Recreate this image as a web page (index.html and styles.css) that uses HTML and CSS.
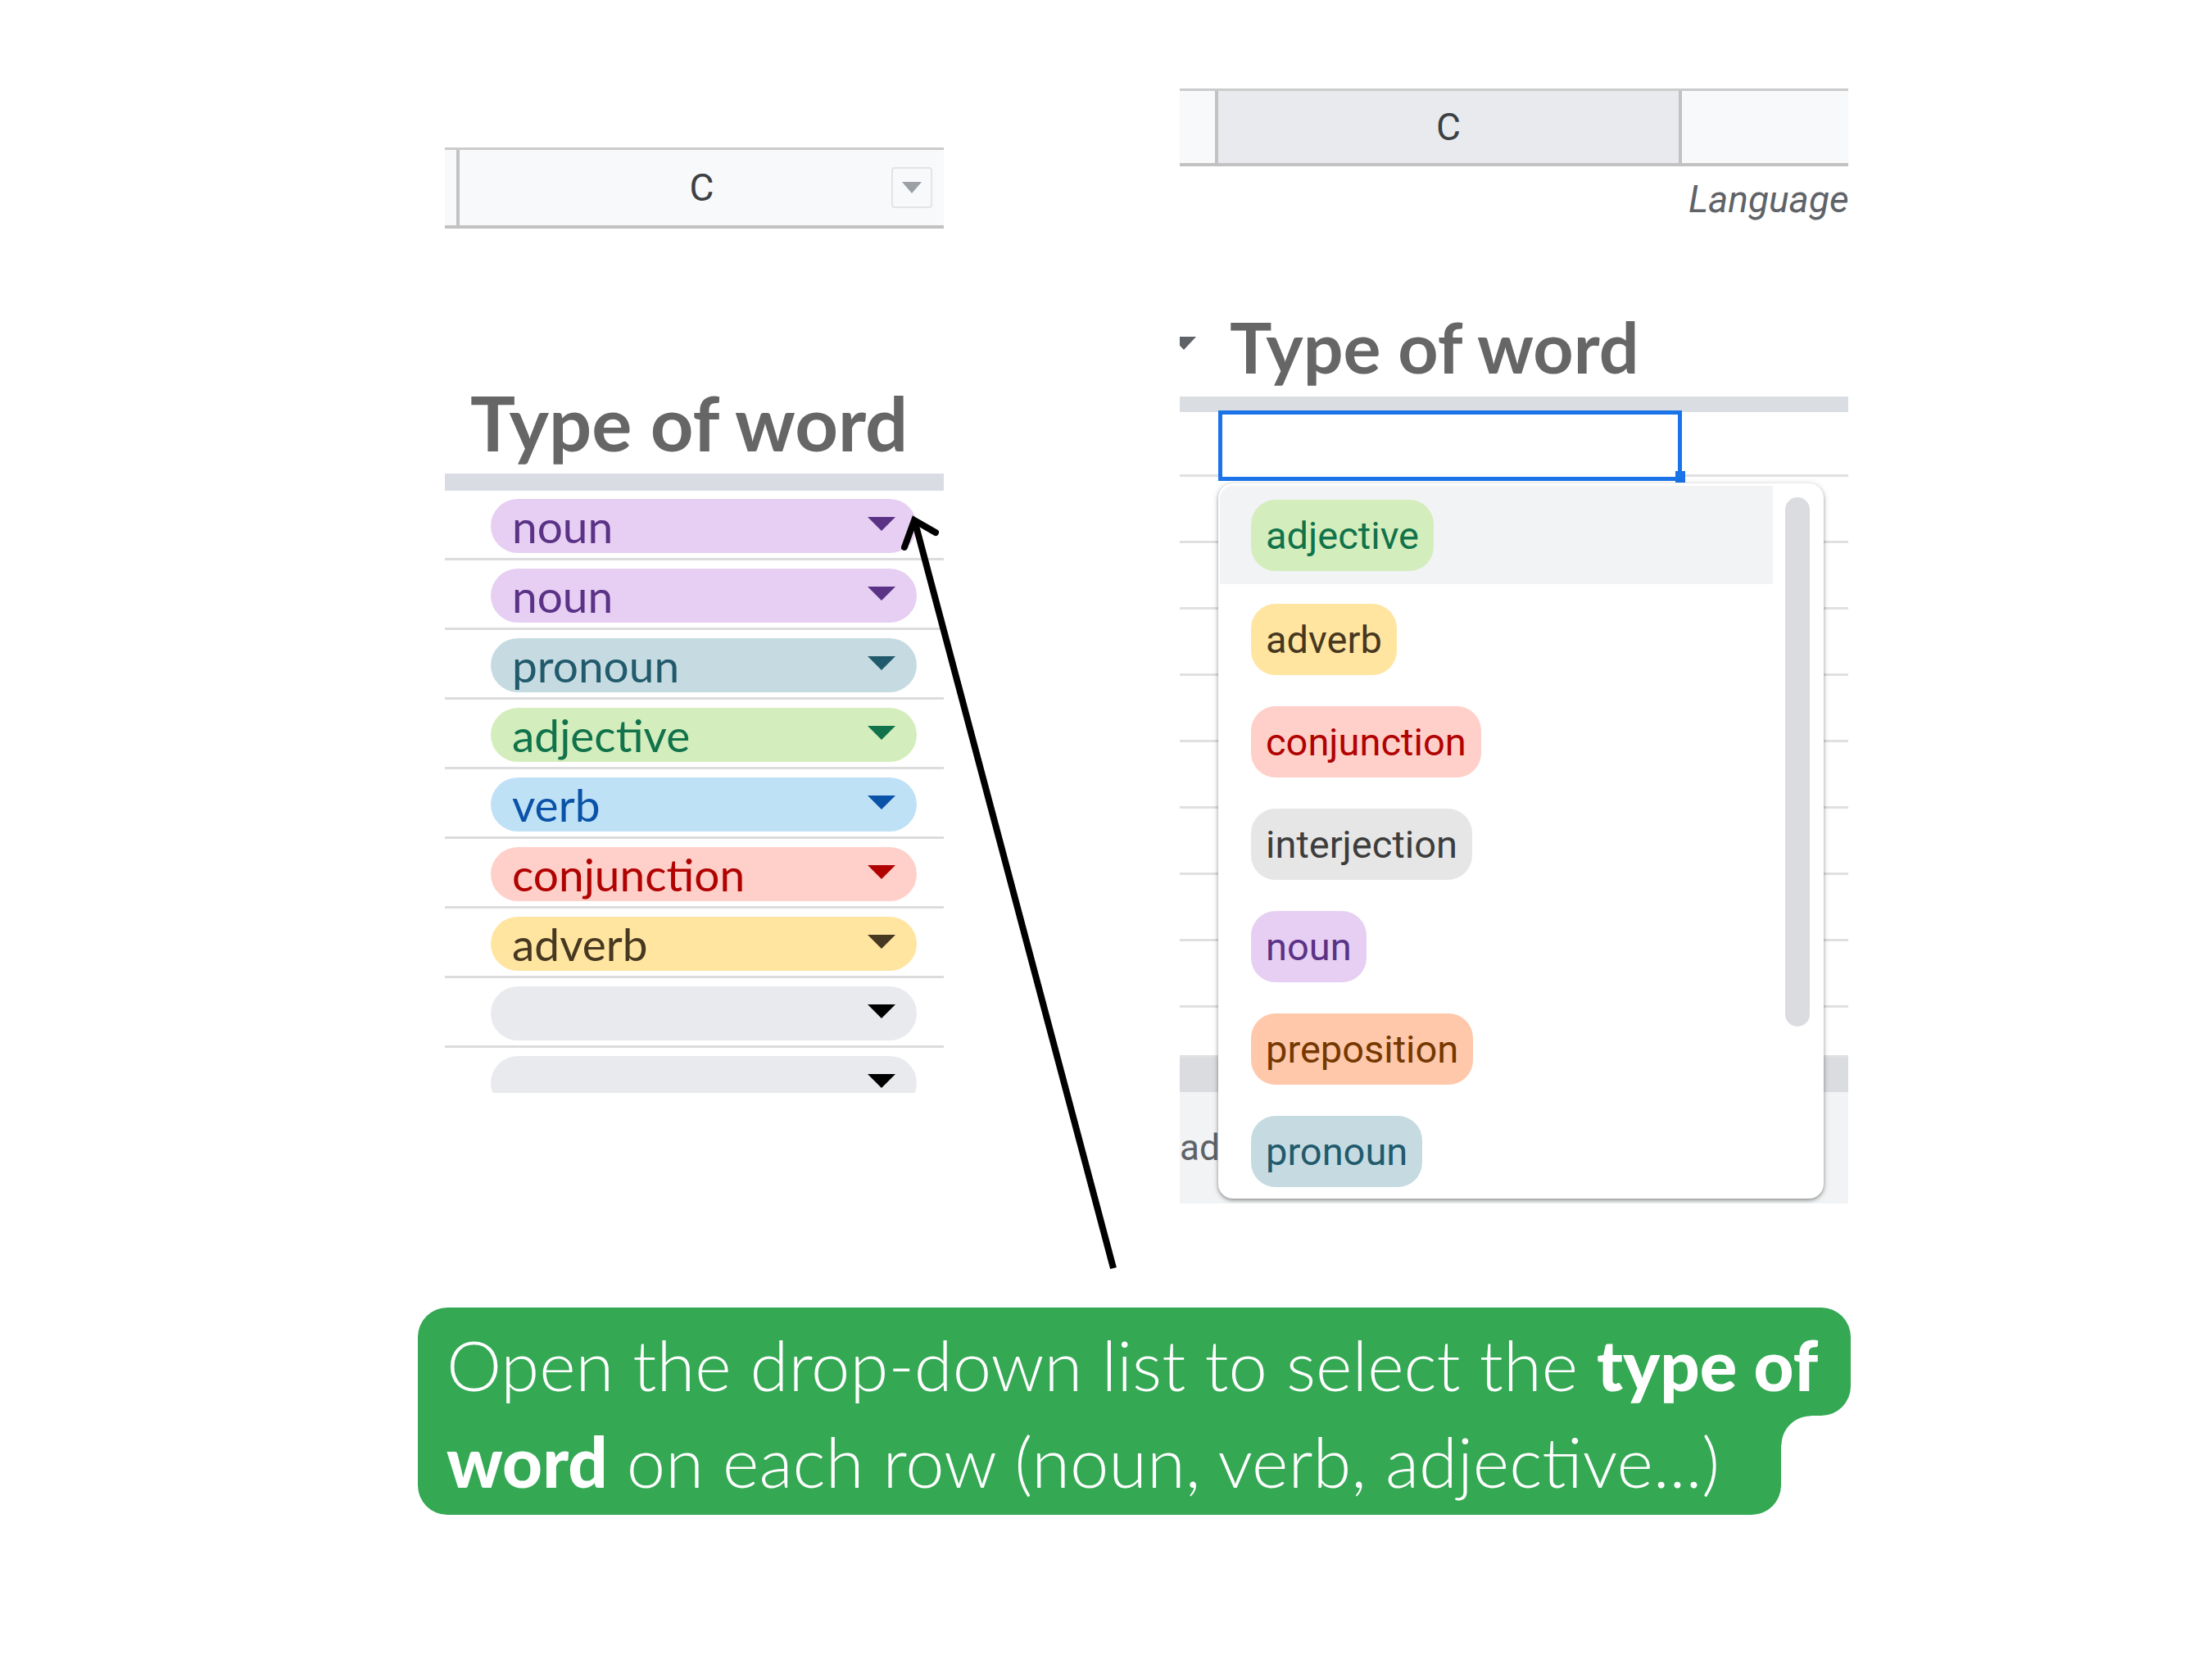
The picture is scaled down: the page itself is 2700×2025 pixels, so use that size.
FILE: index.html
```html
<!DOCTYPE html>
<html lang="en">
<head>
<meta charset="utf-8">
<title>Type of word – drop-down list</title>
<link rel="stylesheet" href="styles.css">
</head>
<body>
<div class="stage">
  <div class="panels">
    <section class="sheet sheet-left">
      <div class="colhead">
        <div class="gutter"></div>
        <div class="headcell">
          <span></span>
          <span class="collabel">C</span>
          <span class="filterbtn"><svg viewBox="0 0 24 14" class="filtertri"><path d="M0 0H24L12 14Z"/></svg></span>
        </div>
      </div>
      <div class="title-row"><h2 class="title">Type of word</h2></div>
      <div class="band"></div>
      <div class="rows">
        <div class="row"><div class="chip c-noun"><span>noun</span><svg class="caret" viewBox="0 0 34 17"><path d="M0 0H34L17 17Z"/></svg></div></div>
        <div class="row"><div class="chip c-noun"><span>noun</span><svg class="caret" viewBox="0 0 34 17"><path d="M0 0H34L17 17Z"/></svg></div></div>
        <div class="row"><div class="chip c-pronoun"><span>pronoun</span><svg class="caret" viewBox="0 0 34 17"><path d="M0 0H34L17 17Z"/></svg></div></div>
        <div class="row"><div class="chip c-adjective"><span>adjective</span><svg class="caret" viewBox="0 0 34 17"><path d="M0 0H34L17 17Z"/></svg></div></div>
        <div class="row"><div class="chip c-verb"><span>verb</span><svg class="caret" viewBox="0 0 34 17"><path d="M0 0H34L17 17Z"/></svg></div></div>
        <div class="row"><div class="chip c-conjunction"><span>conjunction</span><svg class="caret" viewBox="0 0 34 17"><path d="M0 0H34L17 17Z"/></svg></div></div>
        <div class="row"><div class="chip c-adverb"><span>adverb</span><svg class="caret" viewBox="0 0 34 17"><path d="M0 0H34L17 17Z"/></svg></div></div>
        <div class="row"><div class="chip c-empty"><span></span><svg class="caret" viewBox="0 0 34 17"><path d="M0 0H34L17 17Z"/></svg></div></div>
        <div class="row"><div class="chip c-empty"><span></span><svg class="caret" viewBox="0 0 34 17"><path d="M0 0H34L17 17Z"/></svg></div></div>
      </div>
    </section>

    <section class="sheet sheet-right">
      <div class="colhead2">
        <div class="h-g"></div>
        <div class="h-sel">C</div>
        <div class="h-rest"></div>
      </div>
      <div class="lang-row"><span class="lang">Language</span></div>
      <div class="title-row2">
        <svg class="grouptri" viewBox="0 0 30 16"><path d="M0 0H30L15 16Z"/></svg>
        <h2 class="title2">Type of word</h2>
      </div>
      <div class="band2"></div>
      <div class="rows2">
        <div class="row2"><div class="selcell"></div></div>
        <div class="row2"></div>
        <div class="row2"></div>
        <div class="row2"></div>
        <div class="row2"></div>
        <div class="row2"></div>
        <div class="row2"></div>
        <div class="row2"></div>
        <div class="row2"></div>
        <div class="row2 short"></div>
      </div>
      <div class="grayband"></div>
      <div class="footer"><span class="foottext">ad</span></div>

      <div class="menu">
        <ul class="options">
          <li class="opt hover"><span class="pill c-adjective">adjective</span></li>
          <li class="opt"><span class="pill c-adverb">adverb</span></li>
          <li class="opt"><span class="pill c-conjunction">conjunction</span></li>
          <li class="opt"><span class="pill c-interjection">interjection</span></li>
          <li class="opt"><span class="pill c-noun">noun</span></li>
          <li class="opt"><span class="pill c-preposition">preposition</span></li>
          <li class="opt"><span class="pill c-pronoun">pronoun</span></li>
        </ul>
        <div class="scrollbar"></div>
      </div>
    </section>
  </div>

  <div class="callout">
    <div class="cline first">Open the drop-down list to select the <b>type of</b></div>
    <div class="cline second"><b>word</b> on each row (noun, verb, adjective...)</div>
  </div>

  <svg class="arrow" viewBox="0 0 2700 2025" width="2700" height="2025">
    <line x1="1359" y1="1548" x2="1117" y2="638" stroke="#000" stroke-width="8" stroke-linecap="butt"/>
    <polyline points="1104,668 1116,635 1142,650" fill="none" stroke="#000" stroke-width="8" stroke-linecap="round" stroke-linejoin="miter"/>
  </svg>
</div>
</body>
</html>
```

FILE: styles.css
```css
* { box-sizing: border-box; }

body {
  margin: 0;
  background: #ffffff;
}

.stage {
  position: relative;
  width: 2700px;
  height: 2025px;
  overflow: hidden;
  font-family: Roboto, "Liberation Sans", sans-serif;
}

.panels {
  display: flex;
  align-items: flex-start;
  padding-left: 543px;
  gap: 288px;
}

/* ---------- left sheet ---------- */
.sheet-left {
  width: 609px;
  margin-top: 180px;
  overflow: hidden;
}

.colhead {
  display: flex;
  height: 99px;
  background: #f8f9fa;
  border-top: 3px solid #cbcbcb;
  border-bottom: 4px solid #c2c2c2;
}

.gutter {
  width: 18px;
  border-right: 4px solid #c2c2c2;
}

.headcell {
  flex: 1;
  display: grid;
  grid-template-columns: 1fr auto 1fr;
  align-items: center;
}

.collabel {
  font-size: 46px;
  color: #3c4043;
}

.filterbtn {
  justify-self: end;
  margin-right: 14px;
  width: 50px;
  height: 50px;
  border: 2px solid #e4e4e4;
  border-radius: 4px;
  display: flex;
  align-items: center;
  justify-content: center;
}

.filtertri {
  width: 24px;
  height: 14px;
  fill: #9aa0a6;
}

.title-row {
  height: 299px;
  display: flex;
  align-items: flex-end;
  padding-left: 31px;
  padding-bottom: 7px;
}

.title {
  margin: 0;
  font-family: Lato, "Open Sans", sans-serif;
  font-weight: 700;
  font-size: 92px;
  line-height: 1.2;
  color: #666666;
}

.band {
  height: 21px;
  background: #d9dde3;
}

.rows {
  height: 735px;
  overflow: hidden;
}

.row {
  height: 85px;
  border-bottom: 3px solid #dcdcdc;
  padding-top: 10px;
  padding-left: 56px;
}

.chip {
  width: 520px;
  height: 66px;
  border-radius: 33px;
  display: flex;
  align-items: center;
  justify-content: space-between;
  padding: 0 26px;
  font-family: Lato, "Open Sans", sans-serif;
  font-size: 55px;
  line-height: 66px;
}

.caret {
  width: 34px;
  height: 17px;
  fill: currentColor;
  margin-top: -6px;
}

.c-noun { background: #e6cff2; color: #5a3286; }
.c-pronoun { background: #c6dbe1; color: #215a6c; }
.c-adjective { background: #d4edbc; color: #11734b; }
.c-verb { background: #bfe1f6; color: #0a53a8; }
.c-conjunction { background: #ffcfc9; color: #b10202; }
.c-adverb { background: #ffe5a0; color: #473821; }
.c-empty { background: #e8eaed; color: #000000; }
.c-interjection { background: #e6e6e6; color: #3d3d3d; }
.c-preposition { background: #ffc8aa; color: #753800; }

/* ---------- right sheet ---------- */
.sheet-right {
  position: relative;
  width: 816px;
  margin-top: 108px;
  overflow: hidden;
}

.colhead2 {
  display: flex;
  height: 95px;
  border-top: 3px solid #cbcbcb;
  border-bottom: 4px solid #c2c2c2;
}

.h-g {
  width: 47px;
  background: #f8f9fa;
  border-right: 4px solid #c2c2c2;
}

.h-sel {
  width: 566px;
  background: #e8eaed;
  border-right: 4px solid #c2c2c2;
  display: flex;
  align-items: center;
  justify-content: center;
  font-size: 46px;
  color: #3c4043;
}

.h-rest {
  flex: 1;
  background: #f8f9fa;
}

.lang-row {
  height: 80px;
  display: flex;
  align-items: center;
  padding-left: 621px;
}

.lang {
  font-style: italic;
  font-size: 46px;
  color: #5f6368;
  white-space: nowrap;
}

.title-row2 {
  height: 201px;
  display: flex;
  align-items: flex-end;
  padding-bottom: 10px;
}

.grouptri {
  align-self: flex-start;
  margin-top: 128px;
  margin-left: -10px;
  width: 30px;
  height: 16px;
  fill: #5f6368;
  flex: none;
}

.title2 {
  margin: 0 0 0 41px;
  font-family: Lato, "Open Sans", sans-serif;
  font-weight: 700;
  font-size: 86px;
  line-height: 1.2;
  color: #666666;
}

.band2 {
  height: 19px;
  background: #dadde2;
}

.row2 {
  height: 81px;
  border-bottom: 3px solid #e0e0e0;
}

.row2.short {
  height: 61px;
}

.selcell {
  position: relative;
  margin-left: 47px;
  margin-top: -2px;
  width: 566px;
  height: 86px;
  border: 5px solid #1a73e8;
  background: #ffffff;
}

.selcell::after {
  content: "";
  position: absolute;
  right: -9px;
  bottom: -7px;
  width: 12px;
  height: 14px;
  background: #1a73e8;
}

.grayband {
  height: 42px;
  background: #dadce0;
}

.footer {
  height: 136px;
  background: #f1f3f4;
  display: flex;
  align-items: center;
}

.foottext {
  margin-left: 0;
  font-size: 44px;
  color: #5f6368;
}

/* ---------- drop-down menu ---------- */
.menu {
  position: absolute;
  left: 47px;
  top: 482px;
  width: 739px;
  height: 873px;
  background: #ffffff;
  border-radius: 18px;
  box-shadow: 0 2px 4px rgba(0, 0, 0, 0.35), 0 1px 10px rgba(0, 0, 0, 0.12);
}

.options {
  list-style: none;
  margin: 0;
  padding: 3px 62px 0 2px;
}

.opt {
  height: 125px;
  display: flex;
  align-items: center;
  padding-left: 38px;
}

.opt.hover {
  background: #f1f3f4;
  height: 120px;
  margin-bottom: 5px;
  border-top-left-radius: 16px;
}

.pill {
  height: 87px;
  border-radius: 30px;
  padding: 0 18px;
  font-size: 47px;
  line-height: 87px;
}

.scrollbar {
  position: absolute;
  left: 692px;
  top: 17px;
  width: 30px;
  height: 646px;
  border-radius: 15px;
  background: #dadce0;
}

/* ---------- callout ---------- */
.callout {
  margin-top: 127px;
  margin-left: 510px;
  display: flex;
  flex-direction: column;
  align-items: flex-start;
  font-family: Lato, "Open Sans", sans-serif;
  font-weight: 300;
  font-size: 85px;
  line-height: 1.2;
  color: #ffffff;
  white-space: nowrap;
}

.callout b {
  font-weight: 900;
}

.cline {
  background: #34a853;
  padding-left: 35px;
}

.cline.first {
  width: 1749px;
  height: 132px;
  padding-top: 18px;
  border-radius: 36px 36px 36px 0;
}

.cline.second {
  position: relative;
  width: 1664px;
  height: 121px;
  padding-top: 4px;
  border-radius: 0 0 36px 36px;
}

.cline.second::after {
  content: "";
  position: absolute;
  left: 100%;
  top: 0;
  width: 36px;
  height: 36px;
  background: radial-gradient(circle at 100% 100%, rgba(52, 168, 83, 0) 35px, #34a853 36px);
}

/* ---------- arrow ---------- */
.arrow {
  position: absolute;
  left: 0;
  top: 0;
  pointer-events: none;
}
```
